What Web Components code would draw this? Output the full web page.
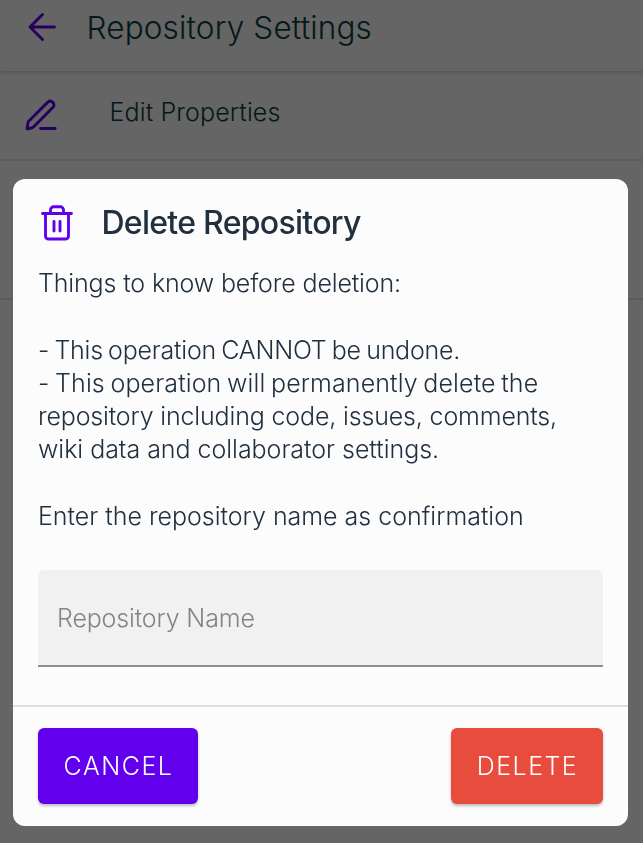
<!DOCTYPE html>
<html lang="en">
<head>
<meta charset="utf-8">
<title>Repository Settings</title>
<style>
html, body { margin: 0; height: 100%; overflow: hidden; }
body { background: #fcfcfc; font-family: Inter, "Open Sans", sans-serif; font-weight: 330; font-size: 25px; }
</style>
</head>
<body>
<settings-page>
  <app-header>Repository Settings</app-header>
  <settings-row><ui-icon slot="icon" name="edit"></ui-icon>Edit Properties</settings-row>
  <settings-row class="tall"></settings-row>
</settings-page>
<modal-dialog>
  <ui-icon slot="icon" name="trash"></ui-icon>
  <span slot="title">Delete Repository</span>
  <text-line style="--ls:-.134px">Things to know before deletion:</text-line>
  <text-line></text-line>
  <text-line style="--ls:-.23px;--ws:-1.5px">- This operation CANNOT be undone.</text-line>
  <text-line style="--ls:.11px;--ws:-1.5px">- This operation will permanently delete the</text-line>
  <text-line style="--ls:-.157px">repository including code, issues, comments,</text-line>
  <text-line style="--ls:-.03px">wiki data and collaborator settings.</text-line>
  <text-line></text-line>
  <text-line style="--ls:-.01px">Enter the repository name as confirmation</text-line>
  <filled-field>Repository Name</filled-field>
  <action-button slot="actions" style="--bg:#6200ee;--w:160px;--ls:1.5px">CANCEL</action-button>
  <action-button slot="actions" style="--bg:#e74c3c;--w:152px;--ls:1.45px">DELETE</action-button>
</modal-dialog>
<script>
const define = (name, html) => customElements.define(name, class extends HTMLElement {
  constructor() { super(); this.attachShadow({ mode: 'open' }).innerHTML = html; }
});

const icons = {
  back: `<svg width="29" height="30" viewBox="0 0 29 30"><path d="M26.500 15H2.500M14.500 2.500L2 15l12.500 12.500"/></svg>`,
  edit: `<svg width="33" height="32" viewBox="0 0 33 32"><path d="M15.500 29.500H30.200M2 29.700L3.200 22.700 22.800 3.100a3.700 3.700 0 0 1 5.200 5.200L9 27.500Q7.500 29.300 2 29.700Z"/></svg>`,
  trash: `<svg width="32" height="36" viewBox="0 0 32 36"><path d="M1.500 8.500h29M4.500 8.500v22.500a3 3 0 0 0 3 3h17a3 3 0 0 0 3-3V8.500M9.500 8.500V5a3.200 3.200 0 0 1 3.200-3.200h6.600A3.200 3.200 0 0 1 22.500 5v3.500M13 16.500v9.500M19 16.500v9.500"/></svg>`
};
customElements.define('ui-icon', class extends HTMLElement {
  connectedCallback() {
    this.attachShadow({ mode: 'open' }).innerHTML = `<style>
      :host { display: block; color: #6200ee; }
      svg { display: block; fill: none; stroke: currentColor; stroke-width: 2.9; stroke-linecap: round; stroke-linejoin: round; }
    </style>${icons[this.getAttribute('name')]}`;
  }
});

define('settings-page', `<style>
  :host { display: flex; flex-direction: column; height: 100%; color: #0b4040; }
</style><slot></slot>`);

define('app-header', `<style>
  :host { display: flex; align-items: flex-start; height: 71px; box-sizing: border-box; padding: 12px 0 0 28px; gap: 29.500px;
    font-size: 31.500px; line-height: 38px; letter-spacing: .16px; box-shadow: 0 1px 4px rgba(0,0,0,.22); }
  span { margin-top: -3px; }
</style><ui-icon name="back"></ui-icon><span><slot></slot></span>`);

define('settings-row', `<style>
  :host { display: flex; align-items: flex-start; height: 90px; box-sizing: border-box; padding: 28px 0 0 24.500px; gap: 52px;
    border-bottom: 2px solid #e6e6e6; line-height: 30px; letter-spacing: .14px; }
  :host(.tall) { height: 139px; }
  span { margin-top: -2px; }
</style><slot name="icon"></slot><span><slot></slot></span>`);

define('text-line', `<style>
  :host { display: block; height: 33.300px; line-height: 33.300px; white-space: nowrap; letter-spacing: var(--ls, 0); word-spacing: var(--ws, 0); }
</style><slot></slot>`);

define('filled-field', `<style>
  :host { display: flex; align-items: center; height: 97px; box-sizing: border-box; margin-top: 36.400px; padding: 2px 0 0 19px;
    background: #f1f1f1; border-bottom: 2px solid #8e8e8e; border-radius: 6px 6px 0 0; color: #848480; letter-spacing: -.15px; }
</style><slot></slot>`);

define('action-button', `<style>
  :host { display: flex; align-items: center; justify-content: center; width: var(--w); height: 76px; background: var(--bg);
    color: #fff; border-radius: 6px; letter-spacing: var(--ls); box-shadow: 0 2px 3px rgba(0,0,0,.25); }
  span { padding-left: 1px; }
</style><span><slot></slot></span>`);

define('modal-dialog', `<style>
  :host { position: fixed; inset: 0; display: flex; align-items: flex-start; background: rgba(0,0,0,.6); color: #212f3f; }
  section { display: flex; flex-direction: column; width: 615px; height: 647px; margin: 179px 0 0 13px; box-sizing: border-box;
    background: #fcfcfc; border-radius: 12px; }
  header { display: flex; align-items: flex-start; gap: 28.500px; height: 88px; box-sizing: border-box; padding: 26px 0 0 28px;
    font-size: 32px; font-weight: 460; line-height: 38px; letter-spacing: -.72px; white-space: nowrap; }
  header span { margin-top: -1px; }
  main { flex: 1; padding: 0 25px; }
  footer { display: flex; justify-content: space-between; height: 121px; box-sizing: border-box; padding: 21px 25px 0;
    border-top: 2px solid #dedede; }
</style>
<section>
  <header><slot name="icon"></slot><span><slot name="title"></slot></span></header>
  <main><slot></slot></main>
  <footer><slot name="actions"></slot></footer>
</section>`);
</script>
</body>
</html>
